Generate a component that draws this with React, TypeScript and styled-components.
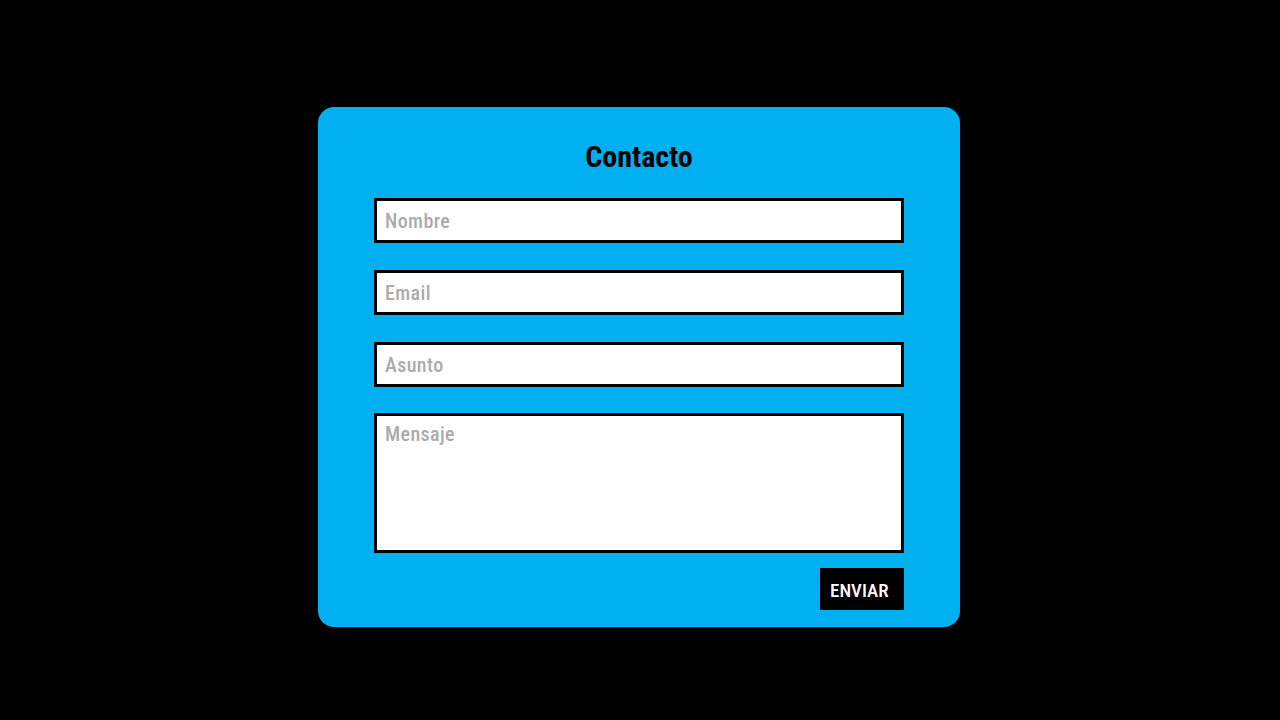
import styled, { createGlobalStyle } from 'styled-components';

const GlobalStyle = createGlobalStyle`
    html, body {
        margin: 0;
        padding: 0;
        background: #000000;
        height: 100%;
    }
    #root {
        height: 100%;
    }
`;

// Roboto is variable on width, so font-stretch gives a DIN-like condensed face
const fontStack = `Roboto, 'Liberation Sans', sans-serif`;

const Page = styled.div`
    width: 1280px;
    height: 720px;
    display: flex;
    align-items: center;
    justify-content: center;
    background: #000000;
    font-family: ${fontStack};
    font-stretch: 80%;
`;

const Card = styled.form`
    box-sizing: border-box;
    width: 642px;
    height: 520px;
    margin: 14px 0 0 -2px;
    background: #00b0f0;
    border-radius: 16px;
    padding: 33px 56px 17px;
    display: flex;
    flex-direction: column;
`;

const Title = styled.h1`
    margin: 0 0 24px;
    height: 34px;
    line-height: 34px;
    text-align: center;
    font-size: 30px;
    font-weight: bold;
    color: #000000;
`;

const Fields = styled.div`
    display: flex;
    flex-direction: column;
    gap: 27px;
`;

const field = `
    box-sizing: border-box;
    width: 100%;
    border: 3px solid #000000;
    background: #ffffff;
    outline: none;
    font-family: ${fontStack};
    font-stretch: 80%;
    font-size: 20px;
    font-weight: 500;
    letter-spacing: 0.4px;
    color: #333333;
    padding: 0 8px;
    margin: 0;
    border-radius: 0;

    &::placeholder {
        color: #ababab;
    }
`;

const Input = styled.input`
    ${field}
    height: 45px;
`;

const TextArea = styled.textarea`
    ${field}
    height: 140px;
    margin-top: -1px;
    padding-top: 6px;
    resize: none;
    display: block;
`;

const Actions = styled.div`
    display: flex;
    justify-content: flex-end;
    margin-top: 15px;
`;

const SendButton = styled.button`
    box-sizing: border-box;
    height: 42px;
    width: 84px;
    border: none;
    background: #000000;
    color: #ffffff;
    font-family: ${fontStack};
    font-stretch: 76%;
    font-size: 19px;
    font-weight: 500;
    text-align: left;
    padding: 2px 0 0 10px;
    cursor: pointer;
`;

const App = () => (
    <Page>
        <GlobalStyle />
        <Card onSubmit={(e) => e.preventDefault()}>
            <Title>Contacto</Title>
            <Fields>
                <Input type='text' placeholder='Nombre' />
                <Input type='email' placeholder='Email' />
                <Input type='text' placeholder='Asunto' />
                <TextArea placeholder='Mensaje' />
            </Fields>
            <Actions>
                <SendButton type='submit'>ENVIAR</SendButton>
            </Actions>
        </Card>
    </Page>
);

export default App;
